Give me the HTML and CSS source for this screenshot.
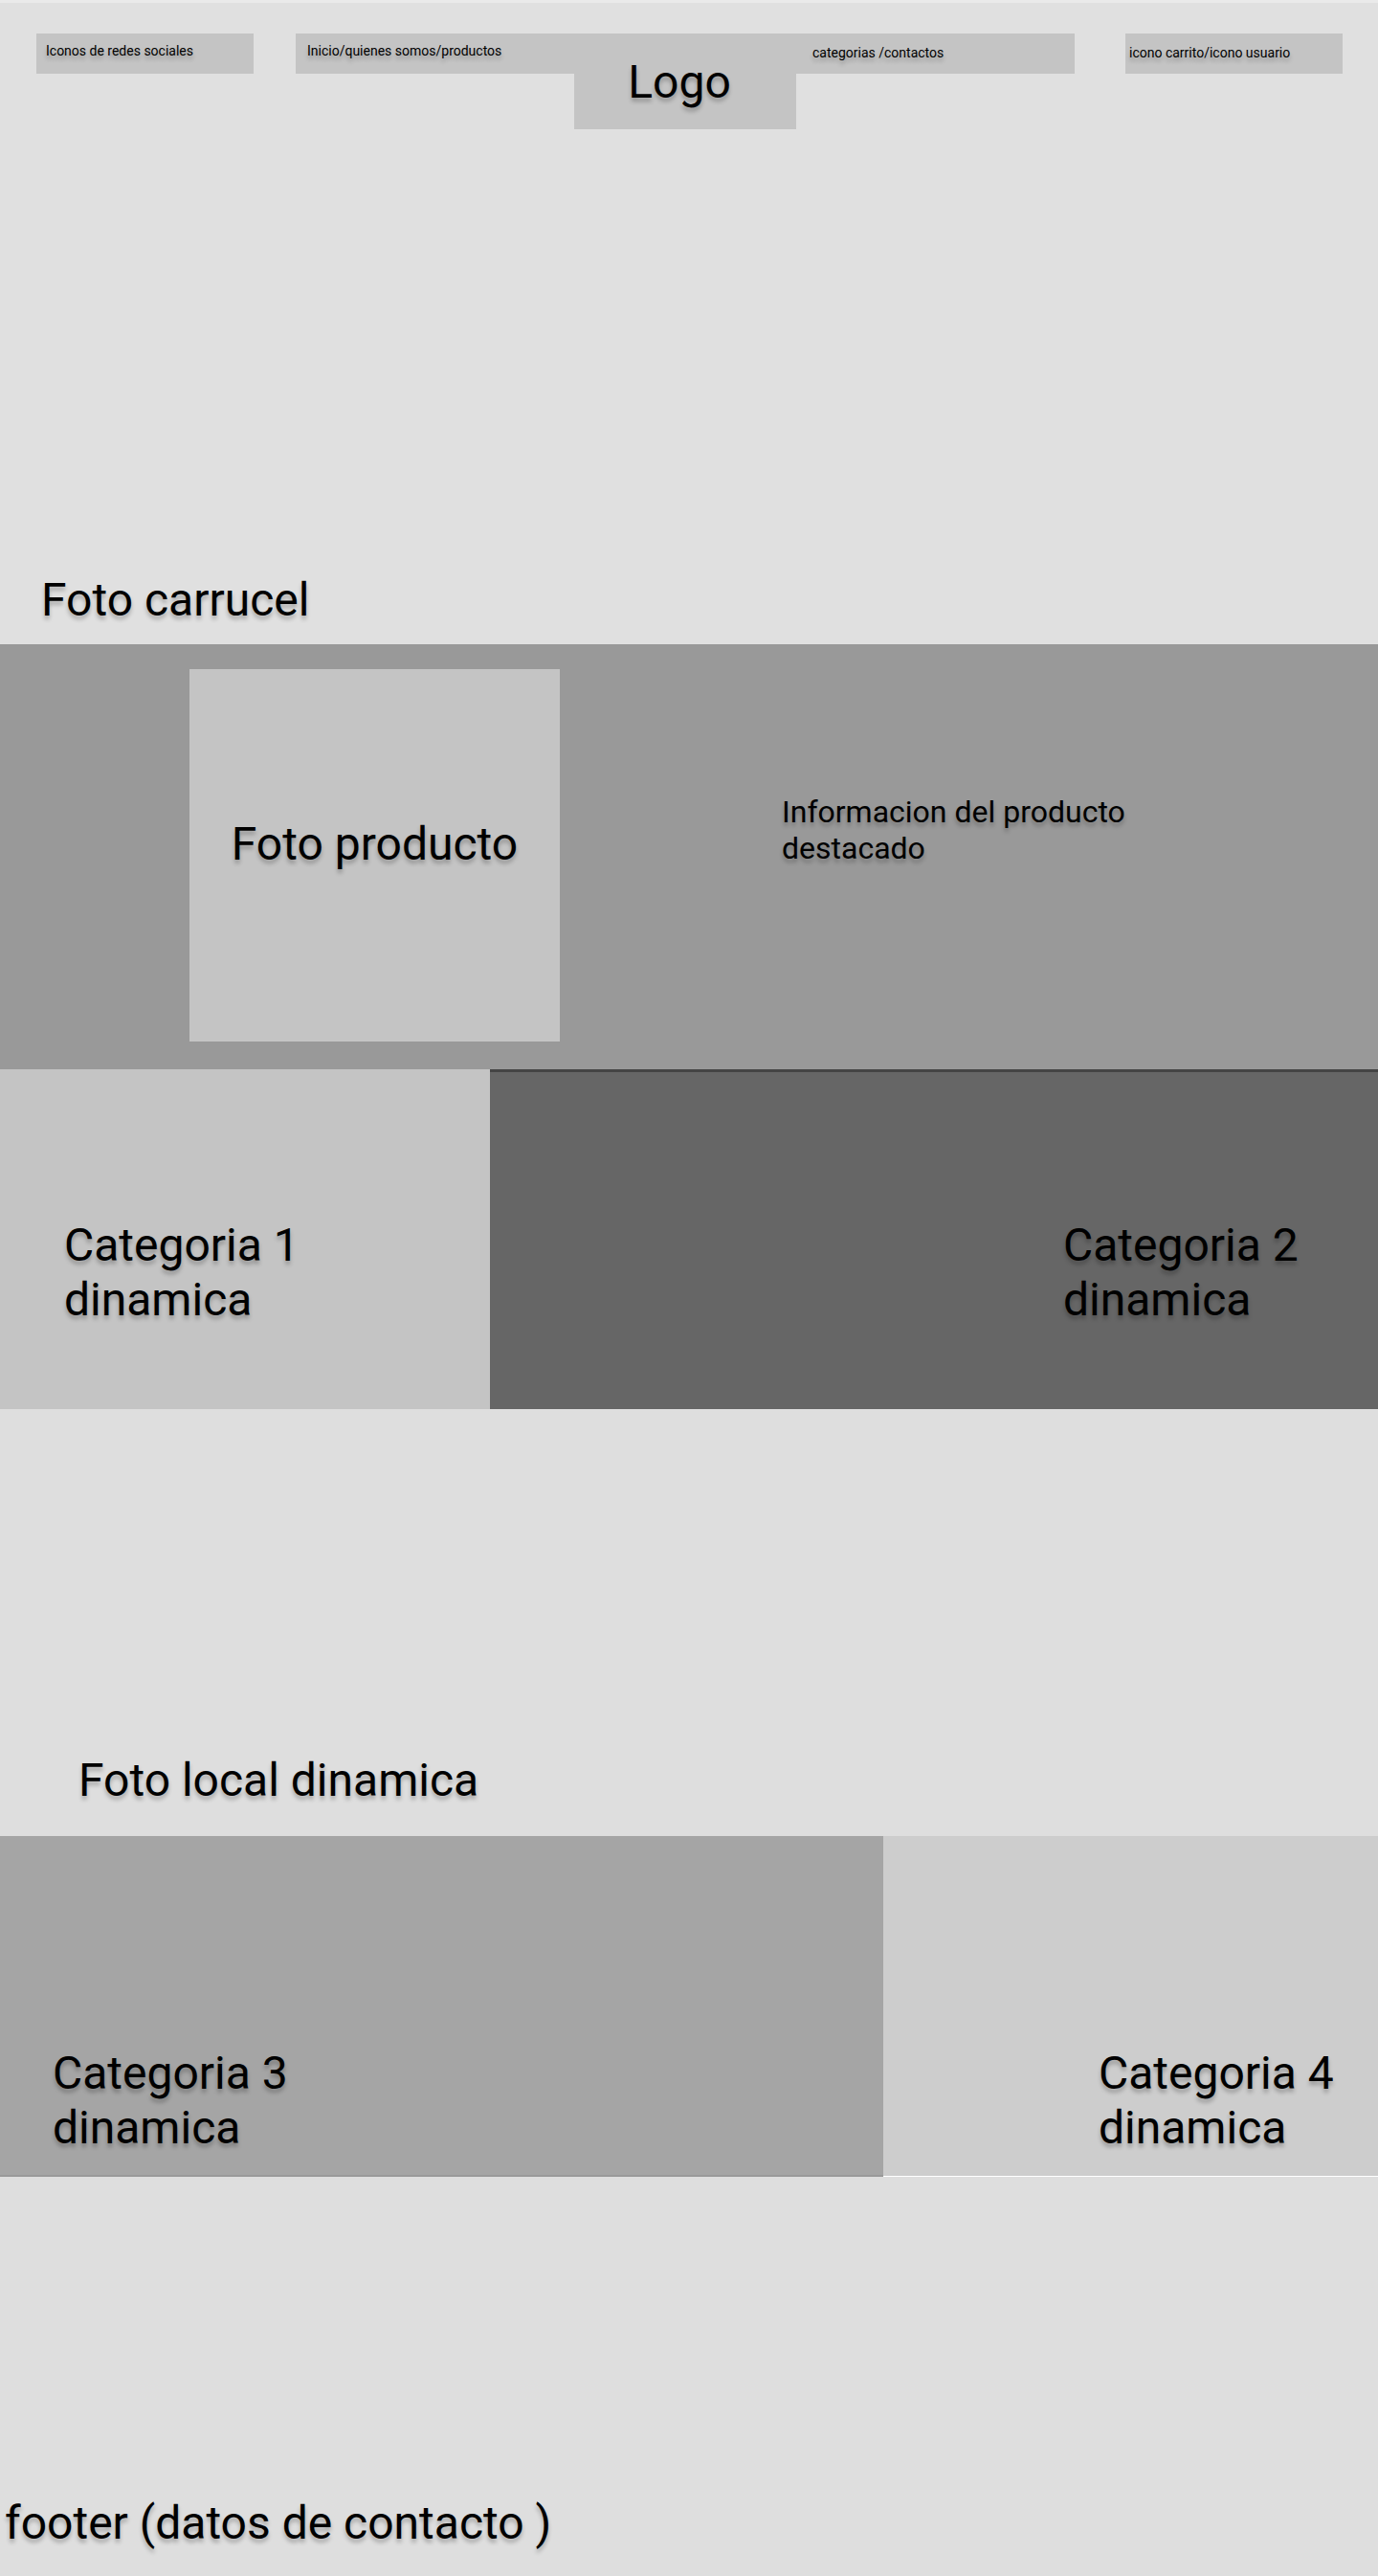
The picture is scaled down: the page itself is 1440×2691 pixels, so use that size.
FILE: index.html
```html
<!DOCTYPE html>
<html lang="es">
<head>
  <meta charset="UTF-8">
  <meta name="viewport" content="width=device-width, initial-scale=1.0">
  <title>Tienda - wireframe</title>
  <link rel="stylesheet" href="styles.css">
</head>
<body>
  <!-- cabecera + carrusel -->
  <section class="hero">
    <header class="top-bar">
      <div class="bar-box social">Iconos de redes sociales</div>
      <nav class="main-nav">
        <div class="nav-left">Inicio/quienes somos/productos</div>
        <div class="logo">Logo</div>
        <div class="nav-right">categorias /contactos</div>
      </nav>
      <div class="bar-box user">icono carrito/icono usuario</div>
    </header>
    <h1 class="big-text carousel-title">Foto carrucel</h1>
  </section>

  <!-- producto destacado -->
  <section class="featured">
    <div class="product-photo">
      <span class="big-text">Foto producto</span>
    </div>
    <div class="product-info">Informacion del producto destacado</div>
  </section>

  <!-- categorias 1 y 2 -->
  <section class="cat-row first">
    <div class="cat cat-1"><span class="big-text cat-name">Categoria 1 dinamica</span></div>
    <div class="cat cat-2"><span class="big-text cat-name">Categoria 2 dinamica</span></div>
  </section>

  <section class="local">
    <h2 class="big-text">Foto local dinamica</h2>
  </section>

  <!-- categorias 3 y 4 -->
  <section class="cat-row second">
    <div class="cat cat-3"><span class="big-text cat-name">Categoria 3 dinamica</span></div>
    <div class="cat cat-4"><span class="big-text cat-name">Categoria 4 dinamica</span></div>
  </section>

  <footer class="footer">
    <p class="big-text">footer (datos de contacto )</p>
  </footer>
</body>
</html>
```

FILE: styles.css
```css
* {
  box-sizing: border-box;
}
body {
  margin: 0;
  width: 1440px;
  font-family: Roboto, "Liberation Sans", Arial, sans-serif;
  color: #000;
}
.big-text {
  margin: 0;
  font-size: 48px;
  font-weight: 400;
  line-height: normal;
  text-shadow: 0 4px 4px rgba(0, 0, 0, 0.25);
}

/* cabecera */
.hero {
  height: 673px;
  background-color: #e0e0e0;
  border-top: 3px solid #eaeaea;
  display: flex;
  flex-direction: column;
  justify-content: space-between;
  padding: 32px 0 18px;
}
.top-bar {
  display: flex;
  align-items: flex-start;
  padding-left: 38px;
  font-size: 14px;
  text-shadow: 0 4px 4px rgba(0, 0, 0, 0.25);
}
.bar-box {
  flex-shrink: 0;
  width: 227px;
  height: 42px;
  background-color: #c4c4c4;
}
.social {
  padding: 10px 10px 0;
}
.user {
  margin-left: 53px;
  padding: 12px 4px 0;
}
.main-nav {
  flex-shrink: 0;
  display: flex;
  align-items: flex-start;
  width: 814px;
  height: 42px;
  margin-left: 44px;
  background-color: #c4c4c4;
}
.nav-left {
  width: 291px;
  padding: 10px 12px 0;
}
.logo {
  width: 232px;
  height: 100px;
  background-color: #c4c4c4;
  display: flex;
  justify-content: center;
  align-items: center;
  font-size: 48px;
  padding-right: 12px;
}
.nav-right {
  flex: 1;
  padding: 12px 17px 0;
}
.carousel-title {
  padding-left: 43px;
}

/* destacado */
.featured {
  height: 444px;
  background-color: #999;
  display: flex;
  align-items: flex-start;
  padding: 26px 0 0 198px;
}
.product-photo {
  flex-shrink: 0;
  width: 387px;
  height: 389px;
  background-color: #c4c4c4;
  display: flex;
  justify-content: center;
  align-items: center;
  padding-bottom: 24px;
}
.product-info {
  width: 420px;
  margin: 130px 0 0 232px;
  font-size: 32px;
  text-shadow: 0 4px 4px rgba(0, 0, 0, 0.25);
}

/* categorias */
.cat-row {
  display: flex;
}
.cat-row.first {
  height: 355px;
}
.cat-row.second {
  height: 356px;
}
.cat-name {
  display: block;
  width: 300px;
}
.cat-1 {
  flex-shrink: 0;
  width: 512px;
  background-color: #c4c4c4;
  padding: 155px 0 0 67px;
}
.cat-2 {
  flex: 1;
  background-color: #666;
  border-top: 3px solid #444;
  padding: 152px 0 0 599px;
}
.cat-3 {
  flex-shrink: 0;
  width: 923px;
  height: 356px;
  background-color: #a5a5a5;
  border-bottom: 2px solid #999;
  padding: 219px 0 0 55px;
}
.cat-4 {
  flex: 1;
  min-width: 0;
  height: 355px;
  background-color: #cdcdcd;
  padding: 219px 0 0 225px;
}

.local {
  height: 446px;
  background-color: #dedede;
  display: flex;
  flex-direction: column;
  justify-content: flex-end;
  padding: 0 0 30px 82px;
}

.footer {
  height: 417px;
  background-color: #dedede;
  display: flex;
  flex-direction: column;
  justify-content: flex-end;
  padding: 0 0 27px 5px;
}
```
